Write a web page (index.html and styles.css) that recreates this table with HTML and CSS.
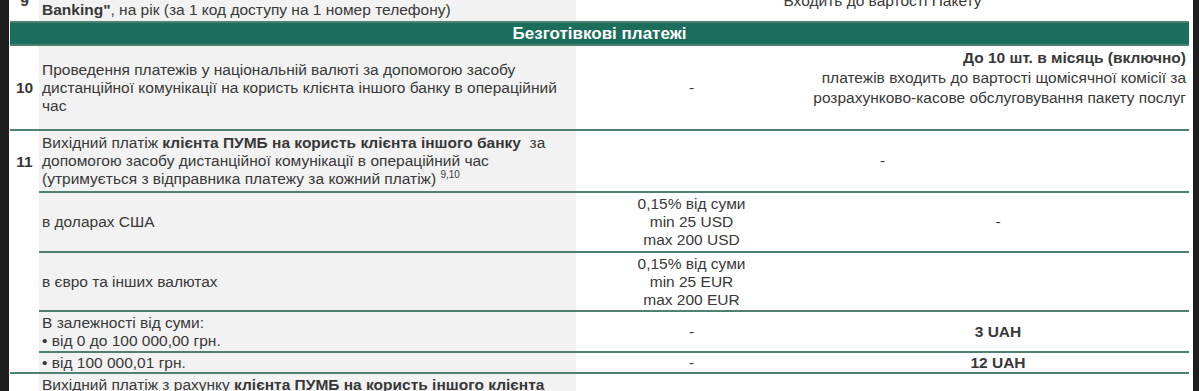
FILE: index.html
```html
<!DOCTYPE html>
<html lang="uk">
<head>
<meta charset="utf-8">
<title>Тарифи</title>
<link rel="stylesheet" href="styles.css">
</head>
<body>
<div class="page">
<table class="tariffs">
<colgroup><col class="c-num"><col class="c-name"><col class="c-mid"><col class="c-right"></colgroup>
<tbody>
<tr class="r9">
<td class="num">9</td>
<td class="name">Щорічна плата за користування системою <b>"PUMB Online</b><br><b>Banking"</b>, на рік (за 1 код доступу на 1 номер телефону)</td>
<td class="val" colspan="2">Входить до вартості Пакету</td>
</tr>
<tr class="section"><td colspan="4">Безготівкові платежі</td></tr>
<tr class="r10">
<td class="num">10</td>
<td class="name">Проведення платежів у національній валюті за допомогою засобу<br>дистанційної комунікації на користь клієнта іншого банку в операційний<br>час</td>
<td class="val">-</td>
<td class="note"><b>До 10 шт. в місяць (включно)</b><br>платежів входить до вартості щомісячної комісії за<br>розрахунково-касове обслуговування пакету послуг<br>&nbsp;</td>
</tr>
<tr class="r11">
<td class="num open">11</td>
<td class="name">Вихідний платіж <b>клієнта ПУМБ на користь клієнта іншого банку</b>&nbsp; за<br>допомогою засобу дистанційної комунікації в операційний час<br>(утримується з відправника платежу за кожний платіж) <sup class="fn">9,10</sup></td>
<td class="val" colspan="2">-</td>
</tr>
<tr class="r-usd">
<td class="num open"></td>
<td class="name">в доларах США</td>
<td class="val">0,15% від суми<br>min 25 USD<br>max 200 USD</td>
<td class="val">-</td>
</tr>
<tr class="r-eur">
<td class="num open"></td>
<td class="name">в євро та інших валютах</td>
<td class="val">0,15% від суми<br>min 25 EUR<br>max 200 EUR</td>
<td class="val"></td>
</tr>
<tr class="r-uah1">
<td class="num open"></td>
<td class="name">В залежності від суми:<br>• від 0 до 100 000,00 грн.</td>
<td class="val">-</td>
<td class="val"><b>3 UAH</b></td>
</tr>
<tr class="r-uah2">
<td class="num"></td>
<td class="name">• від 100 000,01 грн.</td>
<td class="val">-</td>
<td class="val"><b>12 UAH</b></td>
</tr>
<tr class="r-last">
<td class="num">12</td>
<td class="name top">Вихідний платіж з рахунку <b>клієнта ПУМБ на користь іншого клієнта</b><br>ПУМБ за допомогою засобу дистанційної комунікації<br>в операційний час</td>
<td class="val">-</td>
<td class="val">-</td>
</tr>
</tbody>
</table>
</div>
</body>
</html>
```
FILE: styles.css
```css
html, body {
  margin: 0;
  padding: 0;
  height: 391px;
  overflow: hidden;
  background: #1e1e1e;
}

body {
  font-family: "Liberation Sans", Arial, sans-serif;
}

.page {
  margin-left: 9px;
  width: 1183px;
  height: 391px;
  padding-left: 1px;
  background: #ffffff;
  overflow: hidden;
}

.tariffs {
  width: 1179px;
  margin-top: -20px;
  border-collapse: separate;
  border-spacing: 0;
  table-layout: fixed;
  font-size: 15.5px;
  line-height: 18px;
  color: #383838;
}

.c-num { width: 29px; }
.c-name { width: 537px; }
.c-mid { width: 231px; }
.c-right { width: 382px; }

.tariffs td {
  padding: 0 3px;
  border-bottom: 2px solid #4f8171;
  vertical-align: middle;
  white-space: nowrap;
}

.tariffs td.num {
  padding: 0;
  text-align: center;
  font-weight: bold;
}

.tariffs td.num.open {
  border-bottom: none;
}

.tariffs td.name {
  background: #f2f2f2;
  text-align: left;
}

.tariffs td.name.top {
  vertical-align: top;
  padding-top: 2px;
}

.tariffs td.val {
  text-align: center;
}

.tariffs td.note {
  text-align: right;
  line-height: 20px;
}

.section td {
  background: #1b6d5c;
  color: #ffffff;
  font-weight: bold;
  font-size: 17px;
  text-align: center;
}

.fn {
  font-size: 10px;
  line-height: 0;
  vertical-align: 6px;
}

.r9 { height: 43px; }
.section { height: 23px; }
.r10 { height: 85px; }
.r11 { height: 62px; }
.r-usd { height: 60px; }
.r-eur { height: 59px; }
.r-uah1 { height: 41px; }
.r-uah2 { height: 21px; }
.r-last { height: 58px; }
```
